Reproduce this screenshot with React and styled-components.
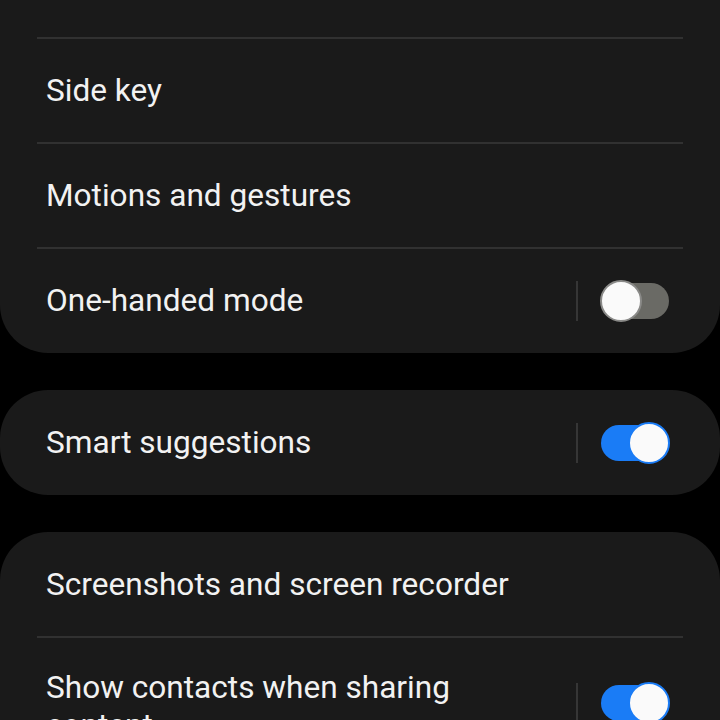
import React from 'react';
import styled, { createGlobalStyle } from 'styled-components';

const GlobalStyle = createGlobalStyle`
    html, body {
        margin : 0;
        padding : 0;
        background : #000;
        overflow : hidden;
    }
    body {
        font-family : Roboto, "Noto Sans", "Liberation Sans", sans-serif;
        color : #f2f2f2;
    }
`;

const Screen = styled.div`
    width : 720px;
    height : 720px;
    overflow : hidden;
    background : #000;
`;

const List = styled.div`
    display : flex;
    flex-direction : column;
    gap : 37px;
    margin-top : -67px;
`;

const Card = styled.div`
    background : #1a1a1a;
    border-radius : 48px;
    padding : 1px 0;
    display : flex;
    flex-direction : column;
`;

const Divider = styled.div`
    height : 2px;
    margin : 0 37px;
    background : #313131;
`;

const Row = styled.div`
    min-height : 103px;
    display : flex;
    align-items : center;
    padding : 0 51px 0 46px;
    gap : 21px;
`;

const Label = styled.div`
    flex : 1;
    font-size : 31.6px;
    line-height : 38px;
    padding : ${p => p.$multi ? '31px 50px 23px 0' : '0'};
`;

const Separator = styled.div`
    width : 2px;
    height : 40px;
    background : #363636;
    margin-right : 2px;
`;

const Track = styled.div`
    position : relative;
    width : 68px;
    height : 36px;
    border-radius : 18px;
    background : ${p => p.$on ? '#1a7cf6' : '#6a6a65'};
`;

const Thumb = styled.div`
    position : absolute;
    top : -3px;
    left : ${p => p.$on ? '27px' : '-1px'};
    width : 38px;
    height : 38px;
    border-radius : 50%;
    background : #fafafa;
    border : 2px solid ${p => p.$on ? '#1a7cf6' : '#8a8a88'};
`;

const Toggle = ({ on }) => (
    <Track $on={on}>
        <Thumb $on={on} />
    </Track>
);

const SettingRow = ({ label, toggle, on, multi }) => (
    <Row>
        <Label $multi={multi}>{label}</Label>
        {toggle && <Separator />}
        {toggle && <Toggle on={on} />}
    </Row>
);

const groups = [
    [
        { label : 'Labs' },
        { label : 'Side key' },
        { label : 'Motions and gestures' },
        { label : 'One-handed mode', toggle : true, on : false },
    ],
    [
        { label : 'Smart suggestions', toggle : true, on : true },
    ],
    [
        { label : 'Screenshots and screen recorder' },
        { label : 'Show contacts when sharing content', toggle : true, on : true, multi : true },
    ],
];

export default function App() {
    return (
        <>
            <GlobalStyle />
            <Screen>
                <List>
                    {groups.map((rows, gi) => (
                        <Card key={gi}>
                            {rows.map((r, ri) => (
                                <React.Fragment key={r.label}>
                                    {ri > 0 && <Divider />}
                                    <SettingRow {...r} />
                                </React.Fragment>
                            ))}
                        </Card>
                    ))}
                </List>
            </Screen>
        </>
    );
}
